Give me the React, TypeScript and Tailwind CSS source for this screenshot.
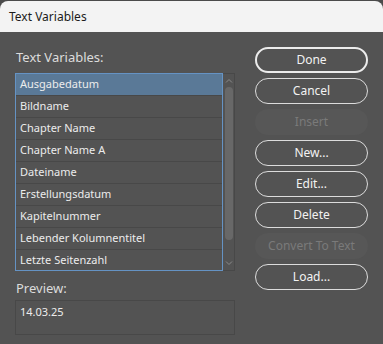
import React from "react";

const items = [
  "Ausgabedatum",
  "Bildname",
  "Chapter Name",
  "Chapter Name A",
  "Dateiname",
  "Erstellungsdatum",
  "Kapitelnummer",
  "Lebender Kolumnentitel",
  "Letzte Seitenzahl",
];

const buttons = [
  { label: "Done", primary: true },
  { label: "Cancel" },
  { label: "Insert", disabled: true },
  { label: "New..." },
  { label: "Edit..." },
  { label: "Delete" },
  { label: "Convert To Text", disabled: true },
  { label: "Load..." },
];

export default function App() {
  return (
    <div className="w-[383px] h-[344px] bg-[#4b4b4b] overflow-hidden font-['Noto_Sans',sans-serif]">
      {/* title bar */}
      <div className="mt-px h-[31px] bg-[#f3f3f3] rounded-t-[8px] flex items-center pl-[9px] text-[12px] text-[#1b1b1b]">
        Text Variables
      </div>

      <div className="h-[312px] bg-[#535353] flex">
        {/* left column */}
        <div className="ml-[15px] w-[220px] flex flex-col">
          <div className="mt-[15px] h-[20px] leading-[20px] text-[13px] text-[#dcdcdc] pl-px">
            Text Variables:
          </div>
          <div className="mt-[6px] h-[198px] flex">
            <div className="w-[208px] h-full border border-[#6593c4] overflow-hidden">
              {items.map((item, i) => (
                <div
                  key={item}
                  className={`h-[22px] border-b border-[#484848] pl-[4px] flex items-center text-[11px] text-[#ececec] ${
                    i === 0 ? "bg-[#5a7997]" : ""
                  }`}
                >
                  {item}
                </div>
              ))}
            </div>
            <div className="w-[12px] h-full border border-l-0 border-[#484848] flex flex-col items-center">
              <svg width="8" height="6" viewBox="0 0 8 6" className="mt-[4px]">
                <path d="M1 4.5 L4 1.5 L7 4.5" fill="none" stroke="#8a8a8a" strokeWidth="1" />
              </svg>
              <div className="mt-[3px] w-[8px] h-[153px] rounded-full bg-[#686868]" />
              <svg width="8" height="6" viewBox="0 0 8 6" className="mt-auto mb-[4px]">
                <path d="M1 1.5 L4 4.5 L7 1.5" fill="none" stroke="#8a8a8a" strokeWidth="1" />
              </svg>
            </div>
          </div>
          <div className="mt-[7px] h-[20px] leading-[20px] text-[13px] text-[#dcdcdc] pl-px">
            Preview:
          </div>
          <div className="mt-[2px] h-[35px] border border-[#484848] pl-[4px] pt-[3px] text-[11px] text-[#ececec]">
            14.03.25
          </div>
        </div>

        {/* right column */}
        <div className="ml-[20px] mt-[15px] w-[113px] flex flex-col gap-[5px]">
          {buttons.map((b) => (
            <div
              key={b.label}
              className={`h-[26px] rounded-full flex items-center justify-center text-[12px] ${
                b.disabled
                  ? "bg-[#575757] text-[#7a7a7a]"
                  : b.primary
                  ? "border-2 border-[#ececec] text-[#f2f2f2]"
                  : "border border-[#dcdcdc] text-[#f2f2f2]"
              }`}
            >
              {b.label}
            </div>
          ))}
        </div>
      </div>
    </div>
  );
}
